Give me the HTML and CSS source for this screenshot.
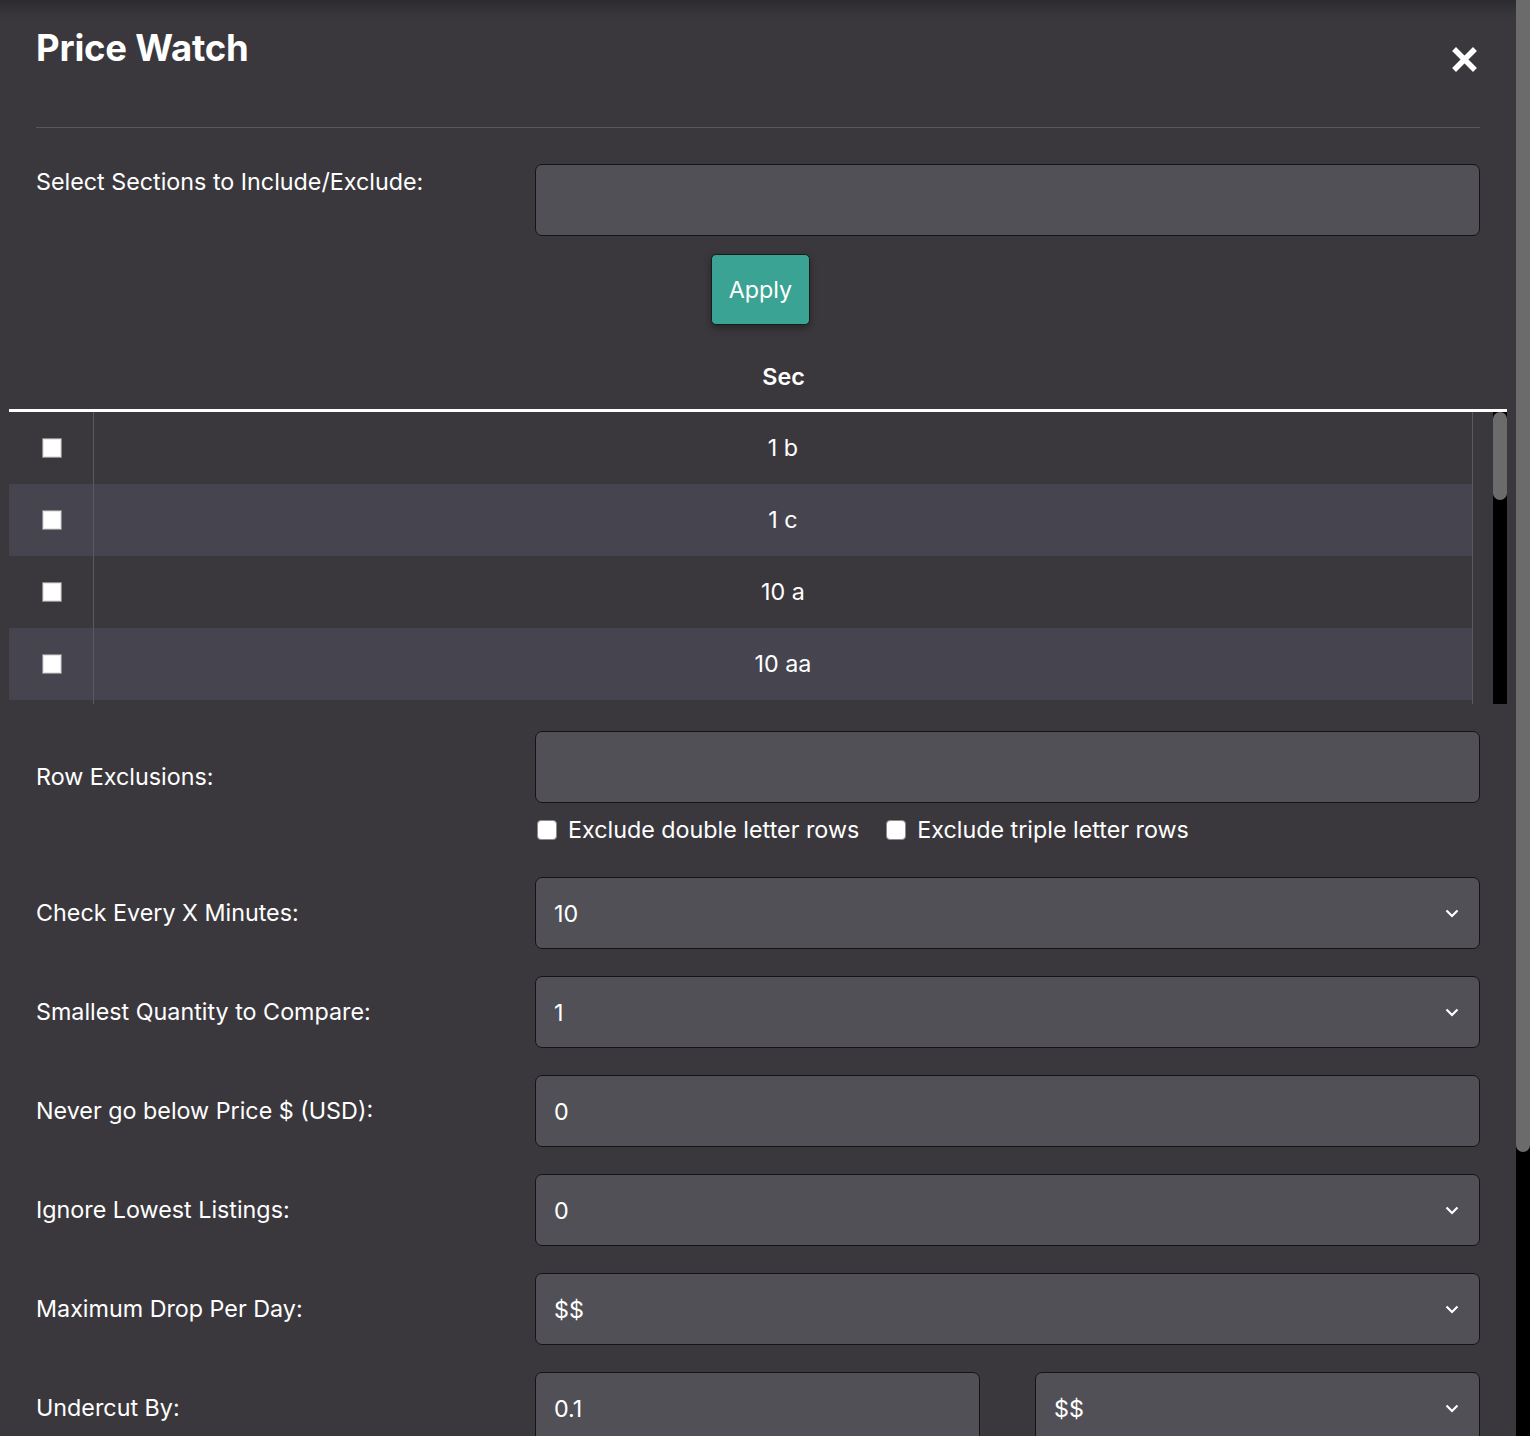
FILE: index.html
```html
<!DOCTYPE html>
<html lang="en">
<head>
<meta charset="utf-8">
<title>Price Watch</title>
<link rel="stylesheet" href="styles.css">
</head>
<body>
<div class="page">
  <div class="modal">
    <header class="modal-header">
      <h1 class="title">Price Watch</h1>
      <button class="close" aria-label="Close">
        <svg width="25" height="25" viewBox="0 0 25 25"><path d="M4 4 L21 21 M21 4 L4 21" stroke="#fff" stroke-width="5.5" stroke-linecap="square" fill="none"/></svg>
      </button>
    </header>

    <div class="form-row">
      <label class="label label-sections">Select Sections to Include/Exclude:</label>
      <div class="field">
        <div class="input"></div>
        <button class="apply">Apply</button>
      </div>
    </div>

    <div class="sec-table">
      <div class="sec-head">
        <div class="cell-check head-check"></div>
        <div class="cell-sec head-sec">Sec</div>
        <div class="head-gap"></div>
      </div>
      <div class="sec-body">
        <div class="sec-rows">
          <div class="sec-row"><div class="cell-check"><input type="checkbox" class="box"></div><div class="cell-sec">1 b</div></div>
          <div class="sec-row"><div class="cell-check"><input type="checkbox" class="box"></div><div class="cell-sec">1 c</div></div>
          <div class="sec-row"><div class="cell-check"><input type="checkbox" class="box"></div><div class="cell-sec">10 a</div></div>
          <div class="sec-row"><div class="cell-check"><input type="checkbox" class="box"></div><div class="cell-sec">10 aa</div></div>
          <div class="sec-row sec-row-partial"><div class="cell-check"></div><div class="cell-sec"></div></div>
        </div>
        <div class="sec-scrollbar"><div class="sec-thumb"></div></div>
      </div>
    </div>

    <div class="form-row row-exclusions">
      <label class="label label-exclusions">Row Exclusions:</label>
      <div class="field">
        <div class="input"></div>
        <div class="checks">
          <label class="check"><input type="checkbox" class="rbox"><span>Exclude double letter rows</span></label>
          <label class="check"><input type="checkbox" class="rbox"><span>Exclude triple letter rows</span></label>
        </div>
      </div>
    </div>

    <div class="form-row row-select first-select">
      <label class="label">Check Every X Minutes:</label>
      <div class="field"><div class="select"><span>10</span><svg class="chev" width="14" height="9" viewBox="0 0 14 9"><path d="M1.5 1.5 L7 7 L12.5 1.5" stroke="#fff" stroke-width="2.2" fill="none"/></svg></div></div>
    </div>

    <div class="form-row row-select">
      <label class="label">Smallest Quantity to Compare:</label>
      <div class="field"><div class="select"><span>1</span><svg class="chev" width="14" height="9" viewBox="0 0 14 9"><path d="M1.5 1.5 L7 7 L12.5 1.5" stroke="#fff" stroke-width="2.2" fill="none"/></svg></div></div>
    </div>

    <div class="form-row row-select">
      <label class="label">Never go below Price $ (USD):</label>
      <div class="field"><div class="select"><span>0</span></div></div>
    </div>

    <div class="form-row row-select">
      <label class="label">Ignore Lowest Listings:</label>
      <div class="field"><div class="select"><span>0</span><svg class="chev" width="14" height="9" viewBox="0 0 14 9"><path d="M1.5 1.5 L7 7 L12.5 1.5" stroke="#fff" stroke-width="2.2" fill="none"/></svg></div></div>
    </div>

    <div class="form-row row-select">
      <label class="label">Maximum Drop Per Day:</label>
      <div class="field"><div class="select"><span>$$</span><svg class="chev" width="14" height="9" viewBox="0 0 14 9"><path d="M1.5 1.5 L7 7 L12.5 1.5" stroke="#fff" stroke-width="2.2" fill="none"/></svg></div></div>
    </div>

    <div class="form-row row-select">
      <label class="label">Undercut By:</label>
      <div class="field field-split">
        <div class="select"><span>0.1</span></div>
        <div class="select"><span>$$</span><svg class="chev" width="14" height="9" viewBox="0 0 14 9"><path d="M1.5 1.5 L7 7 L12.5 1.5" stroke="#fff" stroke-width="2.2" fill="none"/></svg></div>
      </div>
    </div>
  </div>
  <div class="page-scroll"><div class="page-thumb"></div></div>
</div>
</body>
</html>
```

FILE: styles.css
```css
html, body {
  margin: 0;
  padding: 0;
  height: 1436px;
  overflow: hidden;
  background: #3a383d;
}
body {
  font-family: Inter, "Liberation Sans", sans-serif;
  color: #fff;
}
.page {
  display: flex;
  height: 1436px;
}
.modal {
  width: 1516px;
  flex: none;
  box-sizing: border-box;
  padding: 0 36px;
  background: linear-gradient(#2b2a2e 0px, #38363b 14px, #3a383d 26px, #3a383d 100%);
  overflow: hidden;
}
.page-scroll {
  width: 14px;
  flex: none;
  background: #000;
}
.page-thumb {
  height: 1152px;
  background: #6b6b6b;
  border-radius: 0 0 7px 7px;
}

/* header */
.modal-header {
  height: 127px;
  border-bottom: 1px solid #5a585e;
  display: flex;
  justify-content: space-between;
  align-items: flex-start;
}
.title {
  margin: 0;
  padding-top: 24px;
  font-size: 36.5px;
  font-weight: 700;
  line-height: 48px;
  letter-spacing: -0.2px;
}
.close {
  margin: 47px 3px 0 0;
  padding: 0;
  border: 0;
  background: none;
  width: 25px;
  height: 25px;
  display: block;
}
.close svg { display: block; }

/* form rows */
.form-row {
  display: grid;
  grid-template-columns: 499px 1fr;
  margin-top: 27px;
}
.form-row:nth-child(2) { margin-top: 36px; }
.label {
  font-size: 23.3px;
  line-height: 28px;
}
.label-sections { padding-top: 4px; }
.label-exclusions { padding-top: 32px; }
.row-select .label { align-self: center; }
.first-select { margin-top: 33px; }

.input {
  height: 72px;
  box-sizing: border-box;
  background: #515056;
  border: 1px solid #141414;
  border-radius: 7px;
}
.apply {
  display: block;
  margin: 18px 0 0 176px;
  width: 99px;
  height: 71px;
  box-sizing: border-box;
  background: #3aa393;
  border: 1px solid #1b1b1b;
  border-radius: 5px;
  box-shadow: 0 3px 7px rgba(0, 0, 0, 0.35);
  color: #fff;
  font-family: Inter, "Liberation Sans", sans-serif;
  font-size: 23.3px;
  padding: 0;
}

/* table */
.sec-table {
  margin: 0 -27px;
}
.sec-head {
  display: flex;
  height: 84px;
  border-bottom: 3px solid #fff;
}
.head-check { border-right: 0 !important; }
.head-sec {
  border-right: 0 !important;
  align-items: flex-end !important;
  padding-bottom: 18px;
  font-weight: 600;
}
.head-gap { width: 34px; flex: none; }
.sec-body {
  display: flex;
  height: 292px;
}
.sec-rows {
  flex: 1;
  overflow: hidden;
}
.sec-scrollbar {
  width: 14px;
  flex: none;
  margin-left: 20px;
  background: #000;
}
.sec-thumb {
  height: 88px;
  background: #6b6b6b;
  border-radius: 7px;
}
.sec-row {
  display: flex;
  height: 72px;
}
.sec-row:nth-child(even) { background: #46444f; }
.sec-row-partial { height: 4px; }
.cell-check {
  width: 85px;
  flex: none;
  display: flex;
  align-items: center;
  justify-content: center;
  border-right: 1px solid #5b5960;
  box-sizing: border-box;
}
.cell-sec {
  flex: 1;
  display: flex;
  align-items: center;
  justify-content: center;
  border-right: 1px solid #5b5960;
  font-size: 23.3px;
  line-height: 28px;
}
.box {
  appearance: none;
  -webkit-appearance: none;
  margin: 0 0 0 1px;
  width: 20px;
  height: 20px;
  background: #fff;
  border: 1px solid #8c8c8c;
  border-radius: 1px;
  box-shadow: inset 0 0 0 1px #e6e6e6;
}

/* row exclusions checks */
.checks {
  display: flex;
  align-items: center;
  margin-top: 13px;
  margin-left: 2px;
  font-size: 23.3px;
  line-height: 28px;
}
.check {
  display: flex;
  align-items: center;
  margin-right: 27px;
}
.rbox {
  appearance: none;
  -webkit-appearance: none;
  margin: 0 11px 0 0;
  width: 20px;
  height: 20px;
  background: #fff;
  border: 1px solid #8c8c8c;
  border-radius: 4px;
}

/* selects */
.select {
  height: 72px;
  box-sizing: border-box;
  background: #515056;
  border: 1px solid #141414;
  border-radius: 7px;
  display: flex;
  align-items: center;
  justify-content: space-between;
  padding: 0 20px 0 18px;
  font-size: 23.3px;
}
.chev { display: block; }
.field-split {
  display: grid;
  grid-template-columns: 1fr 1fr;
  column-gap: 55px;
}
```
